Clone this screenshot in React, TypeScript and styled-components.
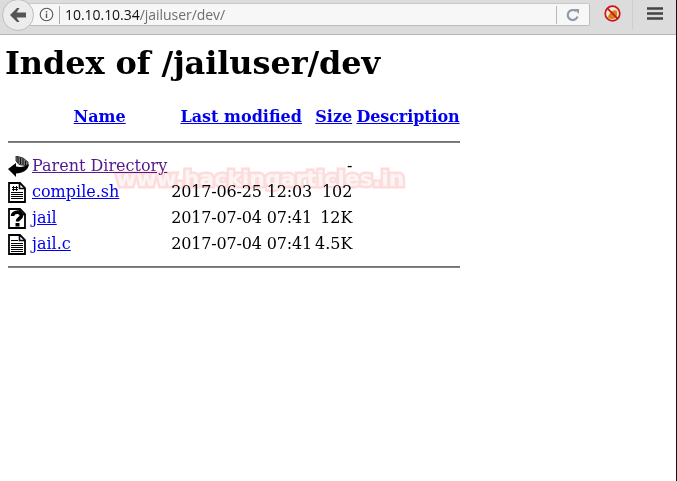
import React from "react";
import styled, { createGlobalStyle } from "styled-components";

const Global = createGlobalStyle`
  html, body { margin: 0; padding: 0; background: #fff; }
  body { width: 677px; height: 481px; overflow: hidden; font-family: "DejaVu Serif", serif; }
`;
const Page = styled.div`position: relative; width: 676px; height: 481px; border-right: 1px solid #111; background: #fff; overflow: hidden;`;
const Toolbar = styled.div`
  height: 34px; border-bottom: 1px solid #b4b4b4; background: #dcdcdc;
  display: flex; align-items: flex-start;
  font-family: "Open Sans", sans-serif;
`;
const BackButton = styled.div`
  position: absolute; left: 2px; top: -1px; width: 30px; height: 30px; border-radius: 50%;
  background: #ececec; border: 1px solid #bdbdbd; display: flex; align-items: center; justify-content: center;
`;
const UrlBar = styled.div`
  margin-left: 16px; width: 574px; height: 23px; margin-top: 3px; box-sizing: border-box;
  background: #f7f7f7; border: 1px solid #bcbcbc; border-top-color: #c8c8c8; border-radius: 0 2px 2px 0;
  display: flex; align-items: center; padding-left: 22px;
`;
const Divider = styled.span`width: 1px; height: 18px; background: #a9a9a9; margin-left: 5px;`;
const Url = styled.span`margin-left: 5px; font-size: 14px; letter-spacing: -0.04px; color: #111; flex: 1;`;
const UrlPath = styled.span`color: #6e6e6e;`;
const Reload = styled.div`width: 32px; height: 18px; border-left: 1px solid #b8b8b8; display: flex; align-items: center; justify-content: center;`;
const AddonSlot = styled.div`width: 42px; height: 27px; padding-left: 2px; box-sizing: border-box; display: flex; align-items: center; justify-content: center;`;
const MenuSlot = styled.div`width: 44px; height: 30px; border-left: 1px solid #cfcfcf; display: flex; align-items: flex-start; justify-content: center; padding-top: 7px; box-sizing: border-box;`;
const Content = styled.main`padding: 0 5px;`;
const Title = styled.h1`margin: 9px 0 22px; font: bold 32px/38px "DejaVu Serif", serif; letter-spacing: -0.1px; color: #000;`;
const Listing = styled.table`border-spacing: 3px 0; font-size: 16px; line-height: 26px; color: #000;`;
const Head = styled.th`padding: 0; font-weight: bold; height: 26px; text-align: center;`;
const DescHead = styled(Head)`letter-spacing: -0.1px; padding-left: 1px;`;
const Link = styled.a<{ $visited?: boolean }>`color: ${(p) => (p.$visited ? "#551a8b" : "#0000ee")}; text-decoration: underline;`;
const Cell = styled.td<{ $right?: boolean }>`padding: 0; height: 26px; vertical-align: middle; white-space: nowrap; text-align: ${(p) => (p.$right ? "right" : "left")};`;
const DateCell = styled(Cell)`letter-spacing: -0.17px; padding-left: 1px;`;
const IconCell = styled(Cell)`width: 20px; line-height: 0;`;
const RuleCell = styled.th<{ $height: number }>`padding: 0; height: ${(p) => p.$height}px;`;
const Rule = styled.hr`margin: 0; border: 0; height: 2px; background: linear-gradient(#6a6a6a, #8a8a8a);`;
const Watermark = styled.div`
  position: absolute; left: 116px; top: 163px; font: bold 22px/32px "DejaVu Sans", sans-serif;
  color: #fbf6f6; letter-spacing: -0.03px; pointer-events: none; white-space: nowrap;
  -webkit-text-stroke: 5px #ffdcdc; paint-order: stroke fill;
  mix-blend-mode: multiply;
`;

const DocIcon = ({ kind }: { kind: "text" | "sh" | "unknown" }) => (
  <svg width="18" height="21" viewBox="0 0 18 21" style={{ display: "block" }}>
    <path d="M1 1H12L17 6V20H1Z" fill="#fff" stroke="#000" strokeWidth="1.800" />
    <path d="M11.500 1V6.500H17" fill="none" stroke="#000" strokeWidth="1.600" />
    {kind === "text" && <path d="M3 6.500H10M3 9.500H15M3 11.500H15M3 13.500H15M3 15.500H15M3 17.500H15" stroke="#000" strokeWidth="1" shapeRendering="crispEdges" />}
    {kind === "sh" && (
      <>
        <path d="M5.500 3.500V8.500M8.500 3.500V8.500M4 5.500H10M4 7.500H10" stroke="#000" strokeWidth="1" shapeRendering="crispEdges" />
        <path d="M3 10.500H15M3 12.500H15M3 14.500H15M3 16.500H15" stroke="#000" strokeWidth="1" shapeRendering="crispEdges" />
      </>
    )}
    {kind === "unknown" && (
      <>
        <path d="M4.500 8C4.500 3.500 13.500 2.500 13.500 7.500C13.500 10.500 9.500 10 9.500 13.500" fill="none" stroke="#000" strokeWidth="3.600" />
        <rect x="7.500" y="15" width="4" height="3.500" fill="#000" />
      </>
    )}
  </svg>
);
const BackIcon = () => (
  <svg width="16" height="14" viewBox="0 0 16 14" style={{ display: "block" }}>
    <path d="M0 7L7 0L9.500 0L6.500 4.500H16V9.500H6.500L9.500 14L7 14Z" fill="#555" />
  </svg>
);
const ParentIcon = () => (
  <svg width="21" height="21" viewBox="0 0 21 21" style={{ display: "block" }}>
    <path d="M8 0L15 2L20 6L20 10L11 8.500L8 5Z" fill="#777" stroke="#111" strokeWidth="0.800" />
    <path d="M10 1V7M12.500 2V8M15 3V8.500M17.500 5V9" stroke="#111" strokeWidth="1" />
    <path d="M0 13L8 7V10.500C12 11.500 17 11 20.500 8C21.500 13 15 17.500 8 17.500V21Z" fill="#000" />
  </svg>
);

export default function App() {
  return (
    <Page>
      <Global />
      <Toolbar>
        <UrlBar>
          <svg width="15" height="15" viewBox="0 0 15 15">
            <circle cx="7.500" cy="7.500" r="6.300" fill="none" stroke="#555" strokeWidth="1.100" />
            <path d="M7.500 6.500V11M7.500 4V5.400" stroke="#555" strokeWidth="1.400" />
          </svg>
          <Divider />
          <Url>10.10.10.34<UrlPath>/jailuser/dev/</UrlPath></Url>
          <Reload>
            <svg width="14" height="14" viewBox="0 0 14 14">
              <path d="M11.500 8.500A5 5 0 1 1 10 3.200" fill="none" stroke="#8d9aa8" strokeWidth="2.200" />
              <path d="M8 1H13V6Z" fill="#8d9aa8" />
            </svg>
          </Reload>
        </UrlBar>
        <AddonSlot>
          <svg width="17" height="17" viewBox="0 0 17 17">
            <circle cx="8.500" cy="8.500" r="7.300" fill="#f1e8d8" stroke="#c8131b" strokeWidth="1.700" />
            <path d="M4 12C5 8 9 4 12.500 5.500C14 9 13 13.500 8.500 14C6 14 5 13.500 4 12Z" fill="#d9830f" />
            <path d="M3.200 3.200L13.800 13.800" stroke="#c8131b" strokeWidth="1.700" />
          </svg>
        </AddonSlot>
        <MenuSlot>
          <svg width="16" height="13" viewBox="0 0 16 13" style={{ display: "block" }}>
            <path d="M0 1.500H16M0 6.500H16M0 11.500H16" stroke="#444" strokeWidth="2.400" />
          </svg>
        </MenuSlot>
      </Toolbar>
      <BackButton><BackIcon /></BackButton>
      <Content>
        <Title>Index of /jailuser/dev</Title>
        <Listing>
          <thead>
            <tr>
              <Head />
              <Head><Link href="#">Name</Link></Head>
              <Head><Link href="#">Last modified</Link></Head>
              <Head><Link href="#">Size</Link></Head>
              <DescHead><Link href="#">Description</Link></DescHead>
            </tr>
            <tr><RuleCell colSpan={5} $height={23}><Rule /></RuleCell></tr>
          </thead>
          <tbody>
            <tr>
              <IconCell><ParentIcon /></IconCell>
              <Cell><Link href="#" $visited>Parent Directory</Link></Cell>
              <Cell />
              <Cell $right>- </Cell>
              <Cell />
            </tr>
            <tr>
              <IconCell><DocIcon kind="sh" /></IconCell>
              <Cell><Link href="#">compile.sh</Link></Cell>
              <DateCell>2017-06-25 12:03</DateCell>
              <Cell $right>102</Cell>
              <Cell />
            </tr>
            <tr>
              <IconCell><DocIcon kind="unknown" /></IconCell>
              <Cell><Link href="#">jail</Link></Cell>
              <DateCell>2017-07-04 07:41</DateCell>
              <Cell $right>12K</Cell>
              <Cell />
            </tr>
            <tr>
              <IconCell><DocIcon kind="text" /></IconCell>
              <Cell><Link href="#">jail.c</Link></Cell>
              <DateCell>2017-07-04 07:41</DateCell>
              <Cell $right>4.5K</Cell>
              <Cell />
            </tr>
            <tr><RuleCell colSpan={5} $height={19}><Rule /></RuleCell></tr>
          </tbody>
        </Listing>
      </Content>
      <Watermark>www.hackingarticles.in</Watermark>
    </Page>
  );
}
